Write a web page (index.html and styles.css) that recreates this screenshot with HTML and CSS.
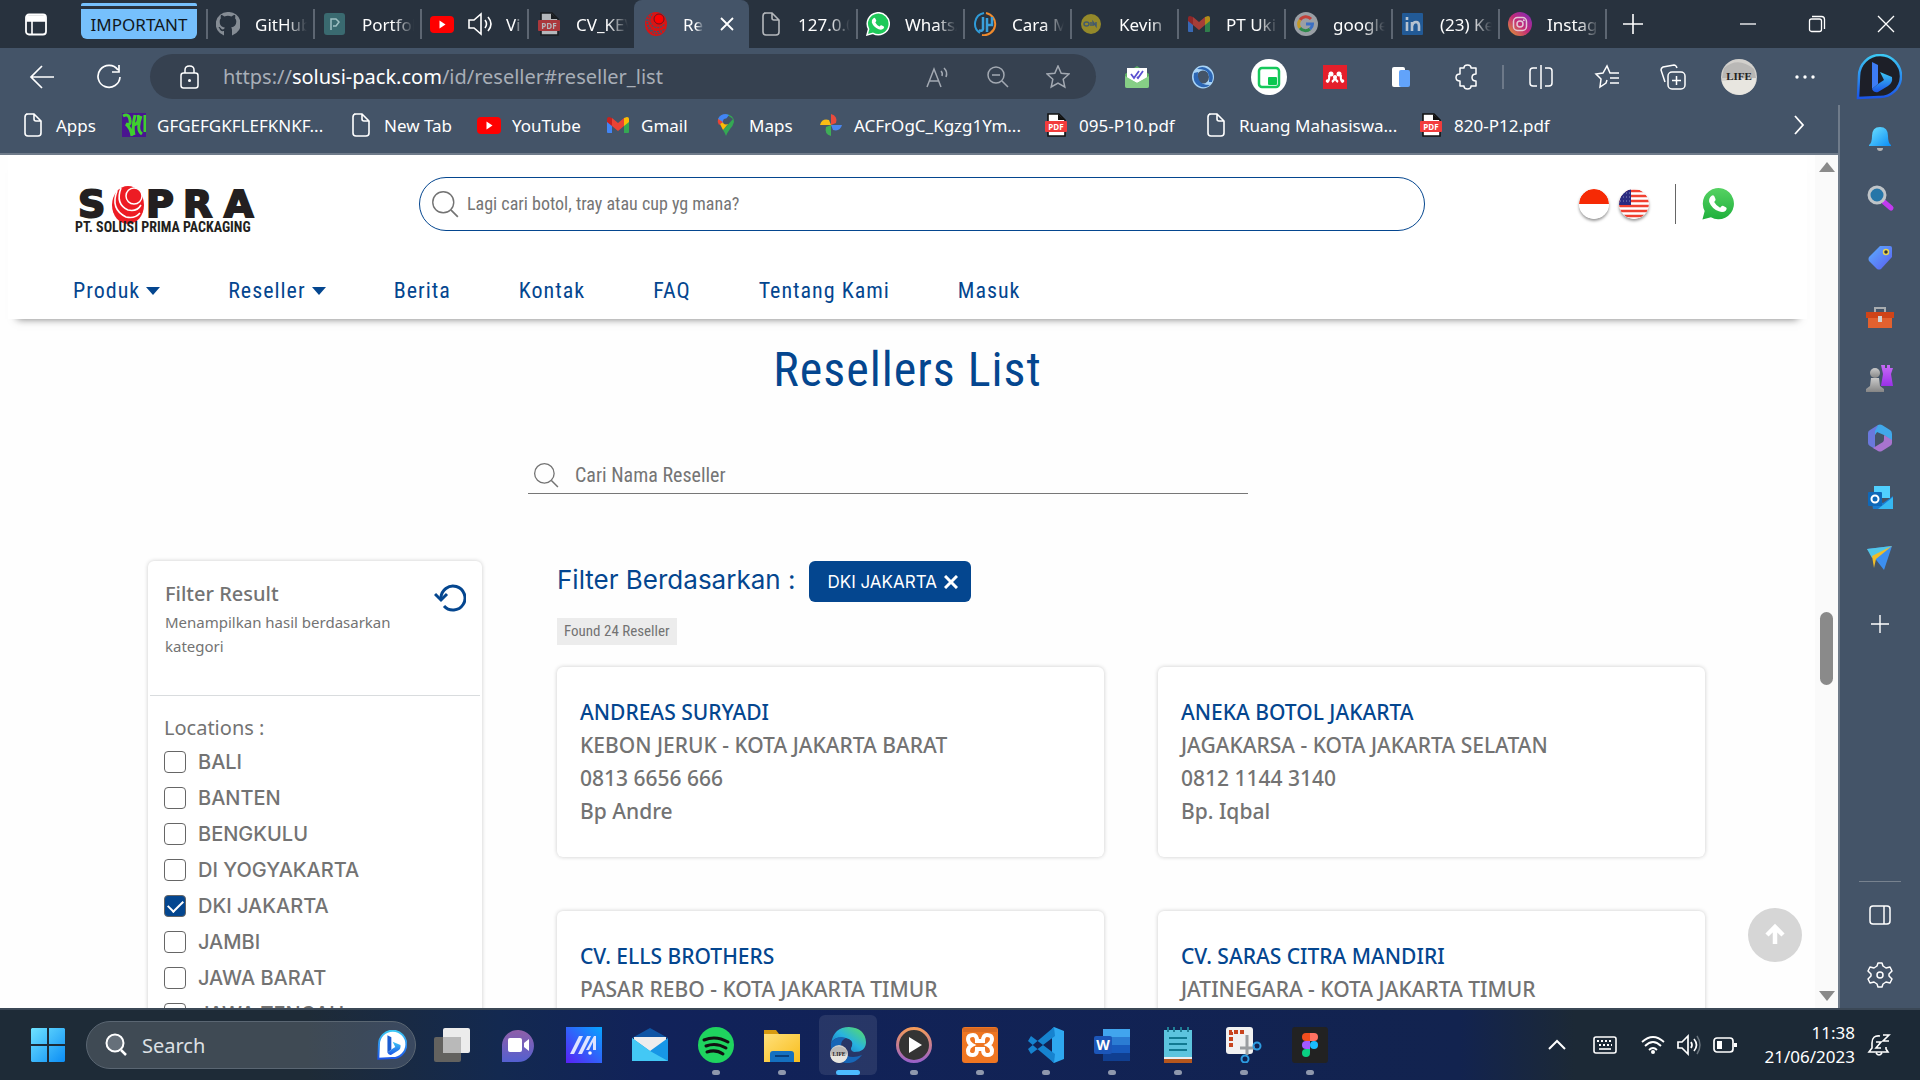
FILE: index.html
```html
<!DOCTYPE html>
<html lang="id">
<head>
<meta charset="utf-8">
<meta name="viewport" content="width=device-width, initial-scale=1">
<title>Resellers List</title>
<link rel="stylesheet" href="styles.css">
</head>
<body>
<svg class="defs" aria-hidden="true">
  <defs>
    <linearGradient id="g-blue" x1="0" y1="0" x2="1" y2="1"><stop offset="0" stop-color="#6fe3ff"/><stop offset="1" stop-color="#0b8df5"/></linearGradient>
    <linearGradient id="g-bing" x1="0" y1="0" x2="0" y2="1"><stop offset="0" stop-color="#3cc8f4"/><stop offset="1" stop-color="#1b55e8"/></linearGradient>
    <linearGradient id="g-insta" x1="1" y1="0" x2="0" y2="1"><stop offset="0" stop-color="#7a2bc0"/><stop offset=".5" stop-color="#c32a78"/><stop offset="1" stop-color="#e0a030"/></linearGradient>
    <linearGradient id="g-tag" x1="0" y1="0" x2="1" y2="1"><stop offset="0" stop-color="#5cb0ff"/><stop offset="1" stop-color="#5a5cf0"/></linearGradient>
    <linearGradient id="g-purple" x1="0" y1="0" x2="0" y2="1"><stop offset="0" stop-color="#c86bf5"/><stop offset="1" stop-color="#9a30e8"/></linearGradient>
    <linearGradient id="g-grey" x1="0" y1="0" x2="0" y2="1"><stop offset="0" stop-color="#c9c9c9"/><stop offset="1" stop-color="#858585"/></linearGradient>
    <linearGradient id="g-chat" x1="0" y1="0" x2="0" y2="1"><stop offset="0" stop-color="#8f5fa8"/><stop offset="1" stop-color="#5460d0"/></linearGradient>
    <linearGradient id="g-asus" x1="0" y1="1" x2="1" y2="0"><stop offset="0" stop-color="#5a20f5"/><stop offset="1" stop-color="#06a5ff"/></linearGradient>
    <linearGradient id="g-edge" x1="0" y1="1" x2="1" y2="0"><stop offset="0" stop-color="#1463b8"/><stop offset=".5" stop-color="#28b3e0"/><stop offset="1" stop-color="#5ce05c"/></linearGradient>
    <linearGradient id="g-wa" x1="0" y1="0" x2="0" y2="1"><stop offset="0" stop-color="#56d263"/><stop offset="1" stop-color="#1fb03c"/></linearGradient>
    <linearGradient id="g-ring" x1="0" y1="0" x2="0" y2="1"><stop offset="0" stop-color="#f39a5a"/><stop offset="1" stop-color="#9a62c8"/></linearGradient>
    <linearGradient id="g-folder" x1="0" y1="0" x2="1" y2="1"><stop offset="0" stop-color="#ffe07a"/><stop offset="1" stop-color="#f8bd1c"/></linearGradient>
    <symbol id="file" viewBox="0 0 24 24"><path d="M5 1h8l7 7v12q0 3-3 3H7q-3 0-3-3V4q0-3 3-3M13 1v5q0 2 2 2h5" fill="none" stroke="currentColor" stroke-width="1.6"/></symbol>
    <symbol id="pdf" viewBox="0 0 24 24"><path d="M4 1h11l6 6v16H4z" fill="#fff" stroke="#111" stroke-width="1.6"/><path d="M14 1v6h7z" fill="#111"/><rect x="1" y="8" width="22" height="11" rx="1" fill="#f23c3c"/><text x="12" y="17" font-size="8" font-weight="700" fill="#fff" text-anchor="middle" font-family="Open Sans, sans-serif">PDF</text></symbol>
    <symbol id="yt" viewBox="0 0 24 24"><rect y="4" width="24" height="17" rx="4" fill="#f00"/><path d="M9.500 8.500v8l6-4z" fill="#fff"/></symbol>
    <symbol id="gmail" viewBox="0 0 24 24"><path d="M1 6v13q0 1 1 1h4V10z" fill="#4285f4"/><path d="M23 6v13q0 1-1 1h-4V10z" fill="#34a853"/><path d="M18 5l3-1q2 0 2 2v3l-5 4z" fill="#fbbc04"/><path d="M6 5L3 4Q1 4 1 6v3l5 4z" fill="#c5221f"/><path d="M6 5l6 5 6-5v8l-6 5-6-5z" fill="#ea4335"/></symbol>
    <symbol id="whatsapp" viewBox="0 0 24 24"><path d="M1 23l1.600-6A11 11 0 1 1 7 21.400z" fill="var(--wa-fill, #1fc95a)" stroke="var(--wa-edge, none)" stroke-width="1.500"/><path d="M7.500 6.200q1-.8 1.800.2l1 2.200q.2.700-1 2 1.500 2.800 4.200 4 1.200-1.600 2-1.300l2.300 1.200q.8.600-.2 2-1.800 1.900-5 .7-5-2-6.800-6.700-.5-2.700 1.700-4.300z" fill="#fff"/></symbol>
    <symbol id="lens" viewBox="0 0 24 24"><circle cx="10.500" cy="10.500" r="9" fill="none" stroke="currentColor" stroke-width="1.200"/><path d="M17 17l6 6" stroke="currentColor" stroke-width="1.400"/></symbol>
    <symbol id="life" viewBox="0 0 36 36"><circle cx="18" cy="18" r="18" fill="#d2d0cc"/><path d="M3 9q14-12 30 1l2 9H1z" fill="#b9b8b6"/><path d="M1 22l34-3q0 14-16 17Q3 34 1 22z" fill="#e8e6e0"/><text x="18" y="21" font-size="11" font-weight="700" fill="#222" text-anchor="middle" font-family="Liberation Serif, serif">LIFE</text></symbol>
  </defs>
</svg>

<header class="tabbar">
  <button class="tab-actions" aria-label="Tab actions"><svg class="i24" viewBox="0 0 24 24"><rect x="2" y="2.500" width="20" height="20" rx="3" fill="none" stroke="#fff" stroke-width="1.800"/><path d="M3 4h18v5H3zM8 9v13" fill="#fff" stroke="#fff" stroke-width="1.600"/></svg></button>
  <button class="tab-group">IMPORTANT</button>
  <nav class="tabs" aria-label="Tabs">
    <a href="#" class="tab"><svg class="i24 dim" viewBox="0 0 24 24"><path d="M12 0a12 12 0 0 0-4 23.400V19c-3 .7-4-1-4.500-2.500L2.400 15c1-.4 2 .3 2.700 1.600.8 1.200 2 1 3 .5l.7-1.600C5 15 3.700 12.800 3.700 9.500c0-1.500.4-2.400 1.200-3.300-.3-1-.3-2 .1-3.200 1.400 0 2.400.7 3.400 1.400a12 12 0 0 1 7 0C16.500 3.700 17.500 3 19 3c.4 1.200.4 2.200 0 3.200 1 1 1.300 2 1.300 3.300 0 3.300-1.600 5.500-5.200 6 .7.700.9 1.500.9 3v5A12 12 0 0 0 12 0z" fill="#b7bcc3"/></svg><span>GitHub</span></a>
    <a href="#" class="tab"><svg class="i24" viewBox="0 0 24 24"><rect x="1" y="1" width="21" height="22" rx="3" fill="#3a6a70"/><path d="M8 18V7h5l3 3-3 4h-3" fill="none" stroke="#9fc0c2" stroke-width="1.500"/></svg><span>Portfol</span></a>
    <a href="#" class="tab media"><svg class="i24"><use href="#yt"/></svg><svg class="i26" viewBox="0 0 26 26"><path d="M2 9h5l7-6v20l-7-6H2zM18 9q3 4 0 8M21 6q6 7 0 14" fill="none" stroke="#fff" stroke-width="1.600"/></svg><span>Vi</span></a>
    <a href="#" class="tab"><svg class="i24 dim"><use href="#pdf"/></svg><span>CV_KEV</span></a>
    <a href="#" class="tab active"><svg class="i24" viewBox="0 0 24 24"><ellipse cx="12" cy="12" rx="11" ry="12" fill="#d91414"/><circle cx="15" cy="7" r="5" fill="#f00" stroke="#631923" stroke-width="1"/><path d="M8 2q-5 8 2 13 6 2 11-3M5 4q-4 9 4 15 6 2 12-2M3 7q-1 9 6 14 5 2 9-1" fill="none" stroke="#445468" stroke-width="1.300" stroke-dasharray="2 1"/></svg><span>Re</span><button aria-label="Close tab"><svg class="i16" viewBox="0 0 16 16"><path d="M2 2l12 12M14 2L2 14" stroke="#fff" stroke-width="1.800"/></svg></button></a>
    <a href="#" class="tab"><svg class="i24 dim"><use href="#file"/></svg><span>127.0.0</span></a>
    <a href="#" class="tab"><svg class="i24 wa-ring"><use href="#whatsapp"/></svg><span>WhatsA</span></a>
    <a href="#" class="tab"><svg class="i24" viewBox="0 0 24 24"><path d="M13 1a11 11 0 0 1-4 22" fill="none" stroke="#f08a2c" stroke-width="2"/><path d="M11 1a11 11 0 0 0-4 20" fill="none" stroke="#2f9bd8" stroke-width="2"/><path d="M10 5v12q-1 3-4 1M14 20V6M14 13h5V5" fill="none" stroke="#3aa0dc" stroke-width="2.500"/></svg><span>Cara M</span></a>
    <a href="#" class="tab"><svg class="i24" viewBox="0 0 24 24"><circle cx="11" cy="12" r="10" fill="#94892a"/><path d="M4 12a2.500 2 0 1 0 5 0a2.500 2 0 1 0-5 0M11 10v4M13 14v-4l3 4v-4" fill="none" stroke="#425a6e" stroke-width="1.500"/></svg><span>Kevin |</span></a>
    <a href="#" class="tab"><svg class="i24 dim"><use href="#gmail"/></svg><span>PT Uki</span></a>
    <a href="#" class="tab"><svg class="i24" viewBox="0 0 24 24"><circle cx="12" cy="12" r="12" fill="#9a9fa5"/><path d="M17 7a7 7 0 0 0-11 1" fill="none" stroke="#c2413a" stroke-width="3"/><path d="M6 8a7 7 0 0 0 0 8" fill="none" stroke="#c49a26" stroke-width="3"/><path d="M6 16a7 7 0 0 0 10 1" fill="none" stroke="#2f8a4b" stroke-width="3"/><path d="M12 12h6.500q0 3-2.500 5" fill="none" stroke="#3b6fc4" stroke-width="3"/></svg><span>google</span></a>
    <a href="#" class="tab"><svg class="i24" viewBox="0 0 24 24"><rect x="1" y="1" width="21" height="22" rx="1" fill="#225a96"/><path d="M6 10v9M6 5v3M11 19v-9M11 14q1-4 4-4 3 0 3 4v5" fill="none" stroke="#b5c2d0" stroke-width="2.600"/></svg><span>(23) Ke</span></a>
    <a href="#" class="tab"><svg class="i24" viewBox="0 0 24 24"><circle cx="12" cy="12" r="12" fill="url(#g-insta)"/><rect x="5.500" y="5.500" width="13" height="13" rx="4" fill="none" stroke="#e3c8d6" stroke-width="1.500"/><circle cx="12" cy="12" r="3" fill="none" stroke="#e3c8d6" stroke-width="1.500"/><circle cx="15.800" cy="8.300" r="1" fill="#e3c8d6"/></svg><span>Instagr</span></a>
  </nav>
  <button class="new-tab" aria-label="New tab"><svg class="i24" viewBox="0 0 24 24"><path d="M12 2v20M2 12h20" stroke="#fff" stroke-width="1.600"/></svg></button>
  <div class="window-controls">
    <button aria-label="Minimize"><svg class="i18" viewBox="0 0 18 18"><path d="M1 9h16" stroke="#fff" stroke-width="1.300"/></svg></button>
    <button aria-label="Restore"><svg class="i18" viewBox="0 0 18 18"><path d="M4 1.500h9.500q3 0 3 3V14" fill="none" stroke="#fff" stroke-width="1.300"/><rect x="1.500" y="4" width="12" height="12.500" rx="2" fill="none" stroke="#fff" stroke-width="1.300"/></svg></button>
    <button aria-label="Close"><svg class="i18" viewBox="0 0 18 18"><path d="M1 1l16 16M17 1L1 17" stroke="#fff" stroke-width="1.300"/></svg></button>
  </div>
</header>

<div class="browser">
  <div class="view">
    <div class="toolbar">
      <button aria-label="Back"><svg class="i26" viewBox="0 0 26 26"><path d="M13 2L2 13l11 11M2 13h23" fill="none" stroke="#fff" stroke-width="1.700"/></svg></button>
      <button aria-label="Refresh"><svg class="i26" viewBox="0 0 26 26"><path d="M22 6A11 11 0 1 0 24 13M23 1v7h-7" fill="none" stroke="#fff" stroke-width="1.700"/></svg></button>
      <div class="address">
        <svg class="i24" viewBox="0 0 24 24"><rect x="4" y="8" width="17" height="15" rx="2.500" fill="none" stroke="#fff" stroke-width="1.500"/><path d="M8 8V5q0-4 4.500-4T17 5v3" fill="none" stroke="#fff" stroke-width="1.500"/><circle cx="12.500" cy="15.500" r="1.500" fill="#fff"/></svg>
        <a href="#reseller_list" class="url">https://<b>solusi-pack.com</b>/id/reseller#reseller_list</a>
        <button aria-label="Read aloud"><svg class="i24" viewBox="0 0 24 24"><path d="M1 22L8 4l7 18M3.500 16h9M15 6q2 2 1 5M18 3q4 4 2 9" fill="none" stroke="#a3a9b2" stroke-width="1.500"/></svg></button>
        <button aria-label="Zoom out"><svg class="i24" viewBox="0 0 24 24"><circle cx="10" cy="10" r="8" fill="none" stroke="#a3a9b2" stroke-width="1.500"/><path d="M6 10h8M16 16l6 6" stroke="#a3a9b2" stroke-width="1.500"/></svg></button>
        <button aria-label="Favourite"><svg class="i24" viewBox="0 0 24 24"><path d="M12 1l3.200 7.200 7.800.8-5.800 5.300L18.800 22 12 18l-6.800 4 1.600-7.700L1 9l7.800-.8z" fill="none" stroke="#a3a9b2" stroke-width="1.500"/></svg></button>
      </div>
      <div class="extensions">
        <button aria-label="Mail tracker"><svg class="i24" viewBox="0 0 24 24"><path d="M0 9l12-8 12 8v12q0 2-2 2H2q-2 0-2-2z" fill="#5cae62"/><path d="M2 3h20v10l-10 5L2 13z" fill="#fff"/><path d="M0 11l12 7 12-7v10q0 2-2 2H2q-2 0-2-2z" fill="#86cf86"/><path d="M6 9l3 4 5-7M12 12l1 1 5-7" fill="none" stroke="#5a50d0" stroke-width="1.800"/></svg></button>
        <button aria-label="Ring"><svg class="i24" viewBox="0 0 24 24"><ellipse cx="12" cy="12" rx="8.500" ry="9" fill="none" stroke="#a8d4f7" stroke-width="5"/><path d="M3 8q-2 9 5 13 6 3 11-1-9 0-11-5-2-4-1-8zM21 17q3-8-4-13-6-4-11 0 9 0 11 4 2 4 1 9z" fill="#2c66b4"/></svg></button>
        <button aria-label="Picture in picture"><svg class="i36" viewBox="0 0 36 36"><circle cx="18" cy="18" r="18" fill="#fff"/><rect x="8" y="9" width="20" height="19" rx="3" fill="none" stroke="#16c95b" stroke-width="2.500"/><rect x="17" y="18" width="9" height="8" rx="1" fill="#0ac850"/></svg></button>
        <button aria-label="Mendeley"><svg class="i24" viewBox="0 0 24 24"><path d="M0 0h24v24H0z" fill="#e41f2b"/><path d="M4 17q3-2 2-7M20 17q-3-2-2-7M9 17q3-2 3-6 0 4 3 6" fill="none" stroke="#fff" stroke-width="2.200"/><circle cx="8" cy="9" r="2.500" fill="#fff"/><circle cx="16" cy="9" r="2.500" fill="#fff"/><circle cx="4.500" cy="16" r="1.800" fill="#fff"/><circle cx="12" cy="12" r="2" fill="#fff"/><circle cx="19.500" cy="16" r="1.800" fill="#fff"/></svg></button>
        <button aria-label="Pages"><svg class="i24" viewBox="0 0 24 24"><rect x="3" y="2" width="13" height="20" rx="2" fill="#fff"/><rect x="10" y="5" width="11" height="17" rx="2" fill="#62a3fa"/></svg></button>
        <button aria-label="Extensions"><svg class="i26" viewBox="0 0 26 26"><path d="M6 4h4q0-3 3.500-3T17 4h5v6q-4 0-4 3.500T22 17v5h-5q0 3-3.500 3T10 22H6v-5q-4 0-4-3.500T6 10z" fill="none" stroke="#fff" stroke-width="1.500" stroke-linejoin="round"/></svg></button>
      </div>
      <div class="tools">
        <button aria-label="Split screen"><svg class="i26" viewBox="0 0 26 26"><path d="M9 4H5Q2 4 2 7v12q0 3 3 3h4M17 4h4q3 0 3 3v12q0 3-3 3h-4M13 1v24" fill="none" stroke="#fff" stroke-width="1.500"/></svg></button>
        <button aria-label="Favourites"><svg class="i26" viewBox="0 0 26 26"><path d="M13 16l-1 3-6 4 1-8-5-5 7-1 4-7 3 7h9M16 14h9M16 19h9" fill="none" stroke="#fff" stroke-width="1.500"/></svg></button>
        <button aria-label="Collections"><svg class="i26" viewBox="0 0 26 26"><path d="M5 18L1 6q0-2 2-3l11-2q2 0 3 3" fill="none" stroke="#fff" stroke-width="1.500"/><rect x="8" y="8" width="17" height="17" rx="4" fill="none" stroke="#fff" stroke-width="1.500"/><path d="M16.500 12v9M12 16.500h9" stroke="#fff" stroke-width="1.500"/></svg></button>
        <button aria-label="Profile"><svg class="i36"><use href="#life"/></svg></button>
        <button aria-label="More"><svg class="i24" viewBox="0 0 24 24"><g fill="#fff"><circle cx="4" cy="12" r="1.700"/><circle cx="12" cy="12" r="1.700"/><circle cx="20" cy="12" r="1.700"/></g></svg></button>
      </div>
    </div>

    <nav class="bookmarks" aria-label="Bookmarks">
      <a href="#"><svg class="i24"><use href="#file"/></svg>Apps</a>
      <a href="#"><svg class="i24" viewBox="0 0 24 24"><path d="M0 0h24v24H0z" fill="#4a1590"/><path d="M1 3q6-3 7 4 1 6-4 4 5 4 6 12M13 2q-3 12-1 20M12 12q6-2 4-10M19 3q-5 14 1 18M23 2v17" fill="none" stroke="#3fcf2e" stroke-width="3"/></svg>GFGEFGKFLEFKNKF...</a>
      <a href="#"><svg class="i24"><use href="#file"/></svg>New Tab</a>
      <a href="#"><svg class="i24"><use href="#yt"/></svg>YouTube</a>
      <a href="#"><svg class="i24"><use href="#gmail"/></svg>Gmail</a>
      <a href="#"><svg class="i24" viewBox="0 0 24 24"><path d="M12 1q8 1 8 8-1 4-4 7-3 4-4 7-1-3-3-6l10-11z" fill="#34a853"/><path d="M4 7l5 10 5-6-6-8Q5 4 4 7z" fill="#fbbc04"/><path d="M12 1Q6 1 4 6l5 4 6-8z" fill="#4285f4"/><path d="M4 6q-1 3 1 6l4-3z" fill="#ea4335"/><circle cx="12" cy="8.500" r="3" fill="#445468"/></svg>Maps</a>
      <a href="#"><svg class="i24" viewBox="0 0 24 24"><path d="M12 1q7 2 5 9l-5 2z" fill="#e94b3c"/><path d="M23 12q-2 7-9 5l-2-5z" fill="#4a86ee"/><path d="M12 23q-7-2-5-9l5-2z" fill="#3fae57"/><path d="M1 12q2-7 9-5l2 5z" fill="#f9bc15"/></svg>ACFrOgC_Kgzg1Ym...</a>
      <a href="#"><svg class="i24"><use href="#pdf"/></svg>095-P10.pdf</a>
      <a href="#"><svg class="i24"><use href="#file"/></svg>Ruang Mahasiswa...</a>
      <a href="#"><svg class="i24"><use href="#pdf"/></svg>820-P12.pdf</a>
      <button aria-label="More bookmarks"><svg class="i24" viewBox="0 0 24 24"><path d="M8 3l8 9-8 9" fill="none" stroke="#fff" stroke-width="1.800"/></svg></button>
    </nav>

    <div class="page-row">
      <div class="page">
        <header class="site-header">
          <div class="site-top">
            <a href="#" class="logo" aria-label="Sopra">
              <svg viewBox="0 0 180 46" width="180" height="46">
                <g font-family="DejaVu Sans, sans-serif" font-weight="700" font-size="38" fill="#231f20" stroke="#231f20" stroke-width="2"><text x="3" y="31">S</text><text x="71" y="31">P</text><text x="108" y="31">R</text><text x="149" y="31">A</text></g>
                <ellipse cx="53" cy="19" rx="16" ry="19" fill="#ed1c24"/><circle cx="59" cy="10" r="8" fill="#ed1c24" stroke="#fff" stroke-width="1.500"/>
                <path d="M46 2q-6 16 7 22 9 2 13-5M42 5q-7 18 9 26 9 2 14-4" fill="none" stroke="#fff" stroke-width="1.600"/>
                <text x="0" y="46" font-family="Roboto Condensed, sans-serif" font-weight="700" font-size="14" fill="#231f20">PT. SOLUSI PRIMA PACKAGING</text>
              </svg>
            </a>
            <label class="site-search"><svg class="i28"><use href="#lens"/></svg><input type="search" aria-label="Cari produk" placeholder="Lagi cari botol, tray atau cup yg mana?"></label>
            <div class="site-links">
              <a href="#" aria-label="Indonesia"><svg class="flag" viewBox="0 0 30 30"><circle cx="15" cy="15" r="15" fill="#fff"/><path d="M0 15a15 15 0 0 1 30 0z" fill="#f62a05"/></svg></a>
              <a href="#" aria-label="English"><svg class="flag" viewBox="0 0 30 30"><clipPath id="round"><circle cx="15" cy="15" r="15"/></clipPath><g clip-path="url(#round)"><path d="M0 0h30v30H0z" fill="#fff"/><path d="M0 2h30M0 7h30M0 12h30M0 17h30M0 22h30M0 27h30" stroke="#f04030" stroke-width="2.500"/><path d="M0 0h12v16H0z" fill="#2a2a80"/><path d="M1 4h11M1 8h11M1 12h11" stroke="#8d8dc0" stroke-width="1" stroke-dasharray="1 2"/></g></svg></a>
              <a href="#" class="chat" aria-label="WhatsApp"><svg width="34" height="34" class="wa-brand"><use href="#whatsapp"/></svg></a>
            </div>
          </div>
          <nav class="site-nav">
            <a href="#">Produk <i class="caret"></i></a>
            <a href="#">Reseller <i class="caret"></i></a>
            <a href="#">Berita</a>
            <a href="#">Kontak</a>
            <a href="#">FAQ</a>
            <a href="#">Tentang Kami</a>
            <a href="#">Masuk</a>
          </nav>
        </header>

        <main>
          <h1>Resellers List</h1>
          <label class="reseller-search"><svg class="i26"><use href="#lens"/></svg><input type="search" aria-label="Cari reseller" placeholder="Cari Nama Reseller"></label>
          <div class="content">
            <aside class="filter">
              <div class="filter-head">
                <div><h2>Filter Result</h2><p>Menampilkan hasil berdasarkan kategori</p></div>
                <button aria-label="Reset"><svg width="32" height="28" viewBox="0 0 32 28"><path d="M7 14a12 12 0 1 1 3 8" fill="none" stroke="#04468f" stroke-width="3"/><path d="M1 10l6 6 6-6" fill="none" stroke="#04468f" stroke-width="3"/></svg></button>
              </div>
              <fieldset>
                <legend>Locations :</legend>
                <label><input type="checkbox">BALI</label>
                <label><input type="checkbox">BANTEN</label>
                <label><input type="checkbox">BENGKULU</label>
                <label><input type="checkbox">DI YOGYAKARTA</label>
                <label><input type="checkbox" checked>DKI JAKARTA</label>
                <label><input type="checkbox">JAMBI</label>
                <label><input type="checkbox">JAWA BARAT</label>
                <label><input type="checkbox">JAWA TENGAH</label>
              </fieldset>
            </aside>
            <section class="results">
              <div class="results-head"><h2>Filter Berdasarkan :</h2><button class="chip">DKI JAKARTA <svg width="14" height="14" viewBox="0 0 14 14"><path d="M1 1l12 12M13 1L1 13" stroke="#fff" stroke-width="3"/></svg></button></div>
              <p class="found">Found 24 Reseller</p>
              <div class="cards">
                <article class="card"><h3>ANDREAS SURYADI</h3><p>KEBON JERUK - KOTA JAKARTA BARAT</p><p>0813 6656 666</p><p>Bp Andre</p></article>
                <article class="card"><h3>ANEKA BOTOL JAKARTA</h3><p>JAGAKARSA - KOTA JAKARTA SELATAN</p><p>0812 1144 3140</p><p>Bp. Iqbal</p></article>
                <article class="card"><h3>CV. ELLS BROTHERS</h3><p>PASAR REBO - KOTA JAKARTA TIMUR</p></article>
                <article class="card"><h3>CV. SARAS CITRA MANDIRI</h3><p>JATINEGARA - KOTA JAKARTA TIMUR</p></article>
              </div>
            </section>
          </div>
        </main>
        <button class="to-top" aria-label="Back to top"><svg class="i24" viewBox="0 0 24 24"><path d="M12 21V5M4 12l8-8 8 8" fill="none" stroke="#fff" stroke-width="4.500"/></svg></button>
      </div>
      <div class="scrollbar" aria-hidden="true"><i class="arrow up"></i><i class="thumb"></i><i class="arrow down"></i></div>
    </div>
  </div>

  <aside class="sidebar">
    <button class="bing" aria-label="Bing"><svg width="46" height="46" viewBox="0 0 46 46"><path d="M2 44L3 22A21 21 0 1 1 23 43z" fill="#1d1f28" stroke="url(#g-bing)" stroke-width="2.500"/><path d="M16 8l6 3v19l-6 5z" fill="#3d7cf5"/><path d="M16 35l6-5 6-4-4-8 12 5q1 6-4 9l-10 6q-4 1-6-3z" fill="url(#g-bing)"/></svg></button>
    <div class="side-apps">
      <button aria-label="Notifications"><svg class="i30" viewBox="0 0 30 30"><path d="M4 22q3-2 3-9 0-9 8-9t8 9q0 7 3 9v1H4z" fill="url(#g-blue)"/><path d="M12 25h6q0 3-3 3t-3-3z" fill="#b4b4b4"/></svg></button>
      <button aria-label="Search"><svg class="i30" viewBox="0 0 30 30"><path d="M19 19l7 6" stroke="#c23af0" stroke-width="5" stroke-linecap="round"/><circle cx="12" cy="12" r="8" fill="#2676a8" stroke="#bfc4c8" stroke-width="3"/></svg></button>
      <button aria-label="Shopping"><svg class="i30" viewBox="0 0 30 30"><path d="M15 3h10q2 0 2 2v9L16 26q-2 1-4 0l-8-8q-1-2 0-4z" fill="url(#g-tag)"/><circle cx="21" cy="9" r="2.500" fill="#333" stroke="#e8d452" stroke-width="1.500"/></svg></button>
      <button aria-label="Tools"><svg class="i30" viewBox="0 0 30 30"><path d="M10 9V5h10v4" fill="none" stroke="#a9adb0" stroke-width="2"/><path d="M3 13h24v12H3z" fill="#e2612f"/><path d="M1 9h28v6H1z" fill="#cf4418"/><path d="M13 13h4v6h-4z" fill="#d0d0d0"/></svg></button>
      <button aria-label="Games"><svg class="i30" viewBox="0 0 30 30"><path d="M17 2h3v3h2V2h3v3h3l-2 6 2 12H16l2-12-2-9z" fill="url(#g-purple)"/><circle cx="10" cy="10" r="5" fill="url(#g-grey)"/><path d="M6 15h8l1 8 4 3v3H1v-3l4-3z" fill="url(#g-grey)"/></svg></button>
      <button aria-label="Microsoft 365"><svg class="i30" viewBox="0 0 30 30"><path d="M13 2L5 7q-2 1-2 3v10q0 2 2 3l5 3V12q0-2 2-3z" fill="#6a78dc"/><path d="M13 2q2-1 4 0l8 5q2 1 2 4v7l-8-6-7-3-2 3V8z" fill="#41a8ea"/><path d="M8 25l10-6q1-1 1-3v-4l8 5v3q0 2-2 3l-8 5q-2 1-4 0z" fill="#a874cf"/></svg></button>
      <button aria-label="Outlook"><svg class="i30" viewBox="0 0 30 30"><path d="M9 3h16v12H9z" fill="#50d0ff"/><path d="M6 14l12 6 10-7v13H8z" fill="#1a7bd0"/><path d="M28 14v12H13z" fill="#36b8f2"/><rect x="3" y="9" width="14" height="14" rx="1" fill="#0f68b8"/><circle cx="10" cy="16" r="3.500" fill="none" stroke="#fff" stroke-width="2"/></svg></button>
      <button aria-label="Drop"><svg class="i30" viewBox="0 0 30 30"><path d="M2 6l25-3-8 24-7-9z" fill="#3c8ff0"/><path d="M2 6l25-3L7 15z" fill="#52c6e8"/><path d="M27 3L7 13l2 12 2-9z" fill="#f0bd28"/></svg></button>
      <button class="add" aria-label="Add"><svg class="i30" viewBox="0 0 30 30"><path d="M15 6v18M6 15h18" stroke="#fff" stroke-width="1.400"/></svg></button>
      <hr>
      <button aria-label="Hide sidebar"><svg class="i30" viewBox="0 0 30 30"><rect x="5" y="6" width="20" height="18" rx="3" fill="none" stroke="#fff" stroke-width="1.500"/><path d="M19 6v18" stroke="#fff" stroke-width="1.500"/></svg></button>
      <button aria-label="Settings"><svg class="i30" viewBox="0 0 30 30"><path d="M12 6l1-3h4l1 3 3 2 4-1 2 4-3 3v2l3 3-2 4-4-1-3 2-1 3h-4l-1-3-3-2-4 1-2-4 3-3v-2l-3-3 2-4 4 1z" fill="none" stroke="#fff" stroke-width="1.500" stroke-linejoin="round"/><circle cx="15" cy="15" r="3" fill="none" stroke="#fff" stroke-width="1.500"/></svg></button>
    </div>
  </aside>
</div>

<footer class="taskbar">
  <button class="start" aria-label="Start"><svg class="i36" viewBox="0 0 36 36"><path d="M2 1h15v16H1V2zM19 1h15l1 1v15H19zM1 19h16v16H2l-1-1zM19 19h16v15l-1 1H19z" fill="url(#g-blue)"/></svg></button>
  <label class="task-search"><svg class="i24" viewBox="0 0 24 24"><circle cx="11" cy="10" r="8.500" fill="#66707a" stroke="#fff" stroke-width="2"/><path d="M17 17l5 5" stroke="#fff" stroke-width="2.500"/></svg><input type="search" aria-label="Search" placeholder="Search"><svg class="i30" viewBox="0 0 46 46"><path d="M2 44L3 22A21 21 0 1 1 23 43z" fill="#fff" stroke="url(#g-bing)" stroke-width="3"/><path d="M16 8l6 3v19l-6 5z" fill="#1b5cd0"/><path d="M16 35l6-5 6-4-4-8 12 5q1 6-4 9l-10 6q-4 1-6-3z" fill="url(#g-bing)"/></svg></label>
  <div class="apps">
    <button aria-label="Task view"><svg class="i36" viewBox="0 0 36 36"><rect y="10" width="27" height="25" rx="2" fill="#63625f"/><rect x="9" y="1" width="27" height="25" rx="2" fill="#ececec"/><path d="M9 10h18v16H9z" fill="#b9b9b9"/></svg></button>
    <button aria-label="Chat"><svg class="i36" viewBox="0 0 36 36"><path d="M2 35V18A16 16 0 1 1 18 35z" fill="url(#g-chat)"/><rect x="8" y="11" width="14" height="14" rx="2" fill="#fff"/><path d="M24 16l5-4v12l-5-4z" fill="#fff"/></svg></button>
    <button aria-label="MyAsus"><svg class="i36" viewBox="0 0 36 36"><path d="M0 0h36v36H0z" fill="url(#g-asus)"/><path d="M4 27L13 9h4L8 27zM12 27l9-18h4l-9 18zM20 23l8-14h2v14h-3v-8l-4 8z" fill="#dfe4ff"/><circle cx="24" cy="26" r="1.800" fill="#fff"/></svg></button>
    <button aria-label="Mail"><svg class="i36" viewBox="0 0 36 36"><path d="M0 11L18 1l18 10z" fill="#0d54a4"/><path d="M2 10h32v14H2z" fill="#ededed"/><path d="M0 11l18 13 18-13v23H0z" fill="#1796e6"/><path d="M0 11l18 13L36 34H0z" fill="#43c8f5"/></svg></button>
    <button class="running" aria-label="Spotify"><svg class="i36" viewBox="0 0 36 36"><circle cx="18" cy="18" r="18" fill="#1fd45f"/><path d="M6 13q12-5 24 2M8 19q10-4 20 2M9 25q9-3 16 2" fill="none" stroke="#111" stroke-width="3" stroke-linecap="round"/></svg></button>
    <button class="running" aria-label="File Explorer"><svg class="i36" viewBox="0 0 36 36"><path d="M0 3h12l3 4v6H0z" fill="#d79a10"/><path d="M0 7h36v28H0z" fill="url(#g-folder)"/><path d="M6 35v-8q0-3 3-3h18q3 0 3 3v8z" fill="#1470c0"/><path d="M11 29h14" stroke="#073f7c" stroke-width="2"/></svg></button>
    <button class="running current" aria-label="Edge"><svg class="i36" viewBox="0 0 36 36"><path d="M1 16Q4 0 19 0q16 1 17 15 0 10-12 10-5-2-2-6 2-6-6-8Q5 9 1 16z" fill="url(#g-edge)"/><path d="M1 16q5-8 15-5-7 3-4 12 6 11 20 5-7 9-16 8Q0 34 1 16z" fill="#1766b7"/></svg><svg class="badge"><use href="#life"/></svg></button>
    <button class="running" aria-label="Media player"><svg class="i36" viewBox="0 0 36 36"><circle cx="18" cy="18" r="16.500" fill="#343434" stroke="url(#g-ring)" stroke-width="3"/><path d="M13 10l13 8-13 8z" fill="#fff"/></svg></button>
    <button class="running" aria-label="XAMPP"><svg class="i36" viewBox="0 0 36 36"><rect width="36" height="36" rx="3" fill="#ef7622"/><path d="M1 1h34v4H1z" fill="#d86a22"/><path d="M11 8q-5 0-5 4t4 6q-4 2-4 6t5 4q4 0 4-6h6q0 6 4 6 5 0 5-4t-4-6q4-2 4-6t-5-4q-4 0-4 6h-6q0-6-4-6z" fill="none" stroke="#fff" stroke-width="4"/></svg></button>
    <button class="running" aria-label="VS Code"><svg class="i36" viewBox="0 0 36 36"><path d="M26 0l10 4v28l-10 4-2-2V2z" fill="#2ea8f0"/><path d="M26 0L0 22l3 5L27 9zM26 36L0 14l3-5 24 18z" fill="#1683cf"/></svg></button>
    <button class="running" aria-label="Word"><svg class="i36" viewBox="0 0 36 36"><path d="M9 2h27v9H9z" fill="#41a5ee"/><path d="M9 10h27v9H9z" fill="#2b7cd3"/><path d="M9 18h27v8H9z" fill="#185abd"/><path d="M9 26h27v8H9z" fill="#103f91"/><rect y="9" width="18" height="18" rx="2" fill="#1c56b8"/><text x="9" y="23" font-size="14" font-weight="700" text-anchor="middle" fill="#fff" font-family="Open Sans, sans-serif">W</text></svg></button>
    <button class="running" aria-label="Notepad"><svg class="i36" viewBox="0 0 36 36"><path d="M4 30h28v6H4z" fill="#b5561d"/><path d="M4 3h28v28H4z" fill="#5cc4de"/><path d="M4 30h28v2H4z" fill="#e9edf0"/><path d="M8 0v5M14 0v5M21 0v5M28 0v5" stroke="#1f8097" stroke-width="2"/><path d="M9 11h18M9 17h18M9 23h18" stroke="#117a92" stroke-width="2"/></svg></button>
    <button class="running" aria-label="Snipping tool"><svg class="i36" viewBox="0 0 36 36"><rect width="27" height="27" rx="3" fill="#f1f1f1"/><path d="M18 5H5v16" fill="none" stroke="#c8441e" stroke-width="4" stroke-dasharray="4 2"/><path d="M21 8v20M14 21h15" stroke="#9a9da0" stroke-width="3"/><circle cx="31" cy="19" r="3.500" fill="none" stroke="#2c9be0" stroke-width="2"/><circle cx="19" cy="32" r="3.500" fill="none" stroke="#2c9be0" stroke-width="2"/></svg></button>
    <button class="running" aria-label="Figma"><svg class="i36" viewBox="0 0 36 36"><rect width="36" height="36" rx="3" fill="#222"/><path d="M18 6h-4a4 4 0 0 0 0 8h4z" fill="#f24e1e"/><path d="M18 6h4a4 4 0 0 1 0 8h-4z" fill="#ff7262"/><path d="M18 14h-4a4 4 0 0 0 0 8h4z" fill="#a259ff"/><circle cx="22" cy="18" r="4" fill="#1abcfe"/><path d="M18 22h-4a4 4 0 1 0 4 4z" fill="#0acf83"/></svg></button>
  </div>
  <div class="tray">
    <button aria-label="Hidden icons"><svg class="i24" viewBox="0 0 24 24"><path d="M4 16l8-8 8 8" fill="none" stroke="#fff" stroke-width="2"/></svg></button>
    <button aria-label="Keyboard"><svg class="i24" viewBox="0 0 24 24"><rect x="1" y="4" width="22" height="16" rx="2" fill="none" stroke="#fff" stroke-width="1.600"/><path d="M4 8h16M6 12h13" stroke="#fff" stroke-width="2" stroke-dasharray="2 2"/><path d="M6 16h12" stroke="#fff" stroke-width="1.600"/></svg></button>
    <button class="status" aria-label="Status">
      <svg class="i24" viewBox="0 0 24 24"><path d="M1 9q11-10 22 0M4 13q8-8 16 0M8 17q4-4 8 0" fill="none" stroke="#fff" stroke-width="1.800"/><circle cx="12" cy="19" r="2" fill="#fff"/></svg>
      <svg class="i24" viewBox="0 0 24 24"><path d="M1 9h4l6-6v18l-6-6H1zM14 9q2 3 0 6M17 6q5 6 0 12" fill="none" stroke="#fff" stroke-width="1.700"/><path d="M20 3q6 9 0 18" fill="none" stroke="#6a747d" stroke-width="1.500"/></svg>
      <svg class="i24" viewBox="0 0 24 24"><rect x="1" y="5" width="19" height="14" rx="3" fill="none" stroke="#fff" stroke-width="1.700"/><path d="M4 8h5v8H4zM21 10h3v4h-3z" fill="#fff"/></svg>
    </button>
    <button class="clock"><span>11:38</span><span>21/06/2023</span></button>
    <button class="bell" aria-label="Do not disturb"><svg class="i24" viewBox="0 0 24 24"><path d="M13 3Q5 2 5 10v5l-3 4h19l-2-3v-2M9 20q3 4 6 0" fill="none" stroke="#fff" stroke-width="1.600"/><path d="M9 9h5l-5 6h5M16 2h6l-6 6h6" fill="none" stroke="#fff" stroke-width="1.600"/></svg></button>
  </div>
</footer>
</body>
</html>
```

FILE: styles.css
```css
:root {
  --ui: "Noto Sans", "Open Sans", sans-serif;
  --narrow: "Roboto Condensed", "Liberation Sans Narrow", sans-serif;
  --wide: "Inter", sans-serif;
  --brand: #04468f;
  --chrome: #445468;
  --grey: #737373;
}
* { box-sizing: border-box; }
body { margin: 0; height: 100vh; display: flex; flex-direction: column; overflow: hidden; font-family: var(--ui); background: #fff; }
button { border: 0; padding: 0; background: none; color: inherit; font: inherit; display: flex; align-items: center; justify-content: center; }
a { color: inherit; text-decoration: none; }
input { font: inherit; min-width: 0; border: 0; background: none; outline: 0; padding: 0; }
h1, h2, h3, p, fieldset { margin: 0; padding: 0; border: 0; font-weight: 400; }
svg { display: block; flex: none; }
.defs { position: absolute; width: 0; height: 0; }
.i16 { width: 16px; height: 16px; }
.i18 { width: 18px; height: 18px; }
.i24 { width: 24px; height: 24px; }
.i26 { width: 26px; height: 26px; }
.i28 { width: 28px; height: 28px; }
.i30 { width: 30px; height: 30px; }
.i36 { width: 36px; height: 36px; }
.dim { opacity: .65; }

/* Tab strip */
.tabbar { flex: none; height: 48px; display: flex; align-items: center; background: #28323e; color: #fff; font-size: 17px; }
.tab-actions { width: 72px; }
.tab-group { align-self: flex-start; width: 116px; height: 36px; margin: 3px 9px 0; padding-top: 6px; background: linear-gradient(#76c0fc 3px, #28323e 3px 6px, #76c0fc 6px); border-radius: 2px 2px 6px 6px; color: #101820; }
.tabs { display: flex; flex: 0 1 1399px; height: 100%; min-width: 0; }
.tab { flex: 1 1 0; min-width: 0; display: flex; align-items: center; gap: 15px; padding: 0 6px 0 10px; background: linear-gradient(#5d6672, #5d6672) left center / 2px 30px no-repeat; }
.tab span { flex: 1; min-width: 0; overflow: hidden; white-space: nowrap; mask-image: linear-gradient(90deg, #000 60%, transparent); }
.tab.media { gap: 13px; }
.tab.active { background: var(--chrome); border-radius: 8px 8px 0 0; padding-right: 14px; }
.tab.active + .tab { background: none; }
.new-tab { width: 54px; height: 30px; border-left: 2px solid #5d6672; }
.window-controls { display: flex; margin-left: auto; }
.window-controls button { width: 69px; height: 48px; }

/* Window body */
.browser { flex: 1; min-height: 0; display: flex; background: var(--chrome); color: #fff; }
.view { flex: 1; min-width: 0; display: flex; flex-direction: column; }
.toolbar { flex: none; height: 57px; display: flex; align-items: center; padding: 0 0 0 8px; }
.toolbar > button { width: 67px; }
.address { flex: 1; height: 45px; margin-left: 8px; padding: 0 8px 0 27px; display: flex; align-items: center; border-radius: 23px; background: #364150; font-size: 20px; }
.url { flex: 1; margin-left: 22px; color: #a8aeb7; white-space: nowrap; }
.url b { color: #fff; font-weight: 400; }
.address button { width: 60px; }
.extensions { display: flex; align-items: center; margin-left: 8px; padding-right: 4px; background: linear-gradient(#6d7989, #6d7989) right center / 2px 24px no-repeat; }
.extensions button, .tools button { width: 66px; }
.tools { display: flex; align-items: center; padding-left: 4px; }
.bookmarks { flex: none; height: 50px; padding: 0 6px 8px 21px; display: grid; grid-template-columns: 101px 227px 128px 129px 108px 105px 225px 160px 215px auto 66px; align-items: center; border-bottom: 2px solid #6f7b8a; font-size: 17px; white-space: nowrap; }
.bookmarks a { display: flex; align-items: center; gap: 11px; }

/* Web page */
.page-row { flex: 1; min-height: 0; display: flex; background: #fff; }
.page { position: relative; flex: 1; min-width: 0; overflow: hidden; background: #fefefe; color: var(--grey); }
.scrollbar { width: 23px; display: flex; flex-direction: column; align-items: center; padding: 7px 0; background: #fafafa; }
.arrow { border: 8px solid transparent; }
.up { border-top: 0; border-bottom: 10px solid #8a8a8a; }
.down { border-bottom: 0; border-top: 10px solid #8a8a8a; margin-top: auto; }
.thumb { width: 13px; height: 73px; margin-top: 440px; border-radius: 7px; background: #8a8a8a; }
.site-header { height: 164px; background: #fff; box-shadow: 0 9px 8px -9px #777; margin: 0 8px; padding: 22px 72px 0 67px; }
.site-top { display: flex; align-items: center; height: 53px; }
.logo { margin: 11px 164px 0 0; }
.site-search { flex: 1; height: 54px; display: flex; align-items: center; gap: 8px; padding: 0 11px; border: 1px solid var(--brand); border-radius: 27px; font-family: var(--narrow); font-size: 18px; }
.site-search input, .reseller-search input { flex: 1; }
input::placeholder { color: #757575; opacity: 1; }
.site-links { display: flex; align-items: center; gap: 10px; margin-left: 154px; }
.flag { width: 30px; height: 30px; border-radius: 50%; box-shadow: 0 2px 3px #999; }
.chat { height: 40px; margin: 0 0 0 16px; padding-left: 25px; border-left: 1px solid #666; display: flex; align-items: center; }
.wa-brand { --wa-fill: url(#g-wa); }
.wa-ring { --wa-edge: #fff; }
.site-nav { display: flex; gap: 68px; padding-top: 44px; color: var(--brand); font-family: var(--narrow); font-size: 22px; line-height: 34px; letter-spacing: 1px; margin-left: -2px; }
.site-nav a { display: flex; align-items: center; gap: 6px; }
.caret { border: 7px solid transparent; border-top: 8px solid var(--brand); border-bottom: 0; }
main h1 { margin-top: 14px; text-align: center; color: var(--brand); font-family: var(--narrow); font-size: 48px; line-height: 74px; letter-spacing: 1px; }
.reseller-search { width: 720px; margin: 53px auto 0 528px; height: 34px; padding: 0 5px 3px; display: flex; align-items: center; gap: 16px; border-bottom: 1px solid #777; font-family: var(--narrow); font-size: 20px; }
.content { display: flex; align-items: flex-start; gap: 75px; padding: 67px 110px 0 148px; }
.filter { flex: 0 0 334px; background: #fff; border-radius: 6px; box-shadow: 0 0 4px #ccc; }
.filter-head { display: flex; justify-content: space-between; align-items: flex-start; height: 135px; margin: 0 2px; padding: 17px 14px 0 15px; border-bottom: 1px solid #d9dcde; }
.filter-head h2 { font-size: 20px; font-weight: 500; line-height: 32px; }
.filter-head p { max-width: 240px; font-size: 15px; line-height: 24px; }
.filter-head button { margin-top: 6px; }
fieldset { padding: 16px 16px 0; display: flex; flex-direction: column; }
legend { float: left; padding: 0; font-size: 20px; line-height: 32px; }
fieldset label { display: flex; align-items: center; gap: 12px; height: 36px; font-family: var(--wide); font-size: 20px; font-weight: 500; }
input[type="checkbox"] { appearance: none; width: 22px; height: 22px; margin: 0; border: 1px solid #666; border-radius: 4px; background: #fff; display: grid; place-items: center; }
input[type="checkbox"]:checked { background: var(--brand); }
input[type="checkbox"]:checked::after { content: ""; width: 13px; height: 7px; border: solid #fff; border-width: 0 0 2px 2px; rotate: -45deg; translate: 0 -2px; }
.results { flex: 1; min-width: 0; }
.results-head { display: flex; gap: 14px; color: var(--brand); font-family: var(--wide); }
.results-head h2 { font-size: 26px; line-height: 38px; }
.chip { height: 41px; padding: 0 13px 0 18px; gap: 7px; border-radius: 6px; background: var(--brand); color: #fff; font-size: 17px; }
.found { width: fit-content; margin-top: 16px; padding: 0 7px; background: #ececec; font-family: var(--narrow); font-size: 15px; line-height: 27px; }
.cards { display: grid; grid-template-columns: 1fr 1fr; gap: 54px; margin-top: 22px; }
.card { height: 190px; padding: 29px 23px; border-radius: 6px; background: #fff; box-shadow: 0 0 4px #ccc; font-size: 21px; line-height: 33px; white-space: nowrap; }
.card h3 { font-size: 21px; font-weight: 500; color: var(--brand); }
.card p { font-weight: 500; }
.to-top { position: absolute; right: 13px; bottom: 46px; width: 54px; height: 54px; border-radius: 50%; background: #d6d6d6; }

/* Side bar */
.sidebar { flex: none; width: 82px; display: flex; flex-direction: column; }
.bing { height: 57px; }
.side-apps { flex: 1; display: flex; flex-direction: column; padding: 3px 0; border-left: 2px solid #6f7b8a; }
.side-apps button { height: 60px; }
.side-apps .add { height: 72px; }
.side-apps hr { width: 42px; margin: auto auto 3px; border: 0; border-top: 1px solid #77828f; }

/* Task bar */
.taskbar { flex: none; height: 72px; display: flex; align-items: center; border-top: 2px solid #3b4856; background: linear-gradient(90deg, #1e2b37 16%, #132950 26%, #11225a 34%, #12234f 76%, #1c2936 82%); color: #fff; }
.start { width: 36px; margin: 0 20px 0 30px; }
.task-search { flex: none; width: 330px; height: 48px; display: flex; align-items: center; gap: 14px; padding: 0 8px 0 17px; border: 1px solid #5a6672; border-radius: 24px; background: #ffffff26; font-size: 20px; }
.task-search input { flex: 1; }
.task-search input::placeholder { color: #dde0e4; }
.apps { display: flex; gap: 8px; margin-left: 7px; }
.apps button { position: relative; width: 58px; height: 60px; border-radius: 6px; }
.running::after { content: ""; position: absolute; bottom: 0; left: 25px; width: 8px; height: 5px; border-radius: 3px; background: #8f98ad; }
.current { background: #ffffff18; }
.current::after { left: 17px; width: 24px; background: #4cbcff; }
.badge { position: absolute; left: 11px; bottom: 12px; width: 18px; height: 18px; }
.tray { display: flex; align-items: center; margin-left: auto; padding-right: 29px; }
.tray > button { min-width: 24px; margin-left: 24px; }
.tray .status { gap: 12px; }
.tray .clock { flex-direction: column; align-items: flex-end; margin-left: 28px; font-size: 17px; line-height: 24px; }
.tray .bell { margin-left: 12px; }
```
